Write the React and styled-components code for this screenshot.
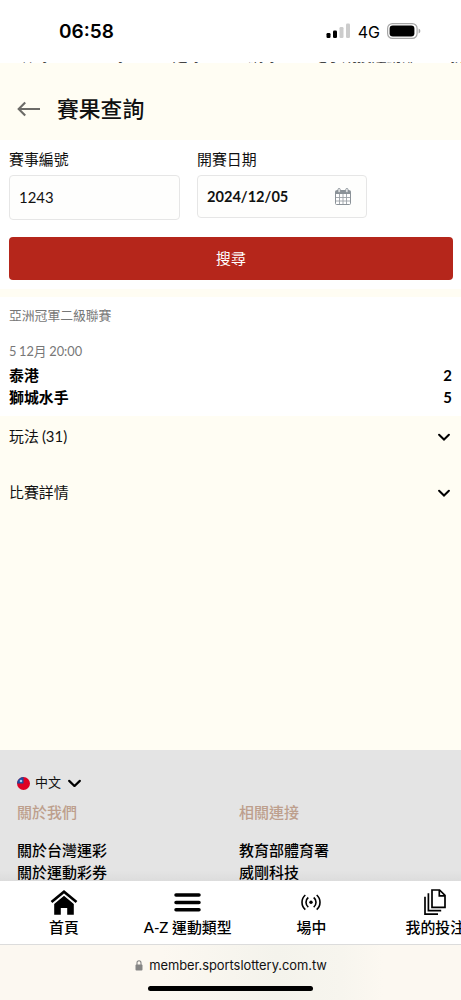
import React from 'react';
import styled, { createGlobalStyle } from 'styled-components';

const CREAM = '#fffdf3';
const RED = '#b5261b';
const BLACK = '#111';

const GlobalStyle = createGlobalStyle`
  * {
    box-sizing: border-box;
  }
  body {
    margin: 0;
    background: ${CREAM};
    color: ${BLACK};
    font-family: Lato, 'Noto Sans CJK TC', sans-serif;
    font-size: 14.9px;
  }
`;

const Screen = styled.div`
  display: flex;
  flex-direction: column;
  width: 461px;
  height: 1000px;
  overflow: hidden;
`;

const StatusBar = styled.header`
  display: flex;
  align-items: center;
  justify-content: space-between;
  flex: none;
  height: 62px;
  padding: 0 40px 0 59px;
  background: #fff;
  font-family: Inter, sans-serif;
`;

const Time = styled.span`
  padding-top: 2px;
  font-size: 19px;
  font-weight: 600;
  line-height: 24px;
  color: #000;
`;

const Indicators = styled.div`
  display: flex;
  align-items: center;
  color: #000;
`;

const Network = styled.span`
  margin: 1px 7px 0 8px;
  font-size: 16px;
  line-height: 20px;
`;

const SportsStrip = styled.nav`
  display: flex;
  align-items: flex-end;
  flex: none;
  gap: 46px;
  height: 2px;
  padding-left: 21px;
  overflow: hidden;
  background: linear-gradient(#fff 50%, ${CREAM} 50%);
  color: #444;
  white-space: nowrap;
`;

const Sport = styled.span`
  flex: none;
  font-size: 14.9px;
  line-height: 17px;

  &:nth-child(n + 5) {
    margin-left: -12px;
  }
`;

const TitleBar = styled.div`
  display: flex;
  align-items: center;
  flex: none;
  gap: 17px;
  height: 76px;
  padding: 14px 17px 0;
`;

const Title = styled.h1`
  margin: 0;
  font-size: 21.8px;
  font-weight: 500;
  line-height: 32px;
`;

const SearchForm = styled.form`
  flex: none;
  height: 149px;
  padding: 8px 9px 0;
  background: #fff;
`;

const Fields = styled.div`
  display: flex;
  gap: 17px;
  height: 89px;
`;

const Field = styled.div`
  width: ${props => props.$width}px;
  line-height: 22px;
`;

const Box = styled.div`
  display: flex;
  align-items: center;
  justify-content: space-between;
  height: ${props => props.$height}px;
  margin-top: 5px;
  padding: 0 15px ${props => (props.$strong ? 0 : 1)}px 9px;
  border: 1px solid #e6e6e6;
  border-radius: 4px;
  background: #fefefd;
  font-size: ${props => (props.$strong ? 14.6 : 14.9)}px;
  font-weight: ${props => (props.$strong ? 700 : 400)};
`;

const SearchButton = styled.button`
  display: block;
  width: 444px;
  height: 43px;
  padding: 0 0 2px;
  border: 0;
  border-radius: 4px;
  background: ${RED};
  color: #fff;
  font: inherit;
`;

const Result = styled.section`
  flex: none;
  height: 119px;
  margin-top: 8px;
  padding: 8px 9px 0;
  background: #fff;
`;

const Meta = styled.div`
  height: ${props => props.$height}px;
  color: #777;
  font-size: 12.8px;
  line-height: 20px;
  word-spacing: -0.7px;
`;

const Team = styled.div`
  display: flex;
  justify-content: space-between;
  color: #000;
  font-weight: 700;
  line-height: 21.5px;
`;

const Accordions = styled.div`
  flex: none;
  height: 334px;
`;

const Accordion = styled.div`
  display: flex;
  align-items: center;
  justify-content: space-between;
  height: 42px;
  margin-bottom: 14px;
  padding: 0 11px 0 9px;

  span {
    padding-bottom: 3px;
    word-spacing: -0.7px;
  }
`;

const Footer = styled.footer`
  flex: none;
  height: 131px;
  padding: 23px 17px 0;
  overflow: hidden;
  background: linear-gradient(#e4e4e4 92%, #dcdcdc);
`;

const Language = styled.div`
  display: flex;
  align-items: center;
  height: 20px;
  font-size: 13px;
  line-height: 20px;

  span {
    margin: 0 7px 2px 5px;
  }
`;

const Columns = styled.div`
  display: grid;
  grid-template-columns: 222px 1fr;
  padding-top: 8px;
`;

const ColumnTitle = styled.h2`
  margin: 0 0 17px;
  color: #bd9f8d;
  font-size: 15px;
  font-weight: 500;
  line-height: 22px;
`;

const FooterLink = styled.a`
  display: block;
  color: #000;
  font-size: 15px;
  font-weight: 500;
  line-height: 21.5px;
`;

const TabBar = styled.nav`
  display: flex;
  flex: none;
  height: 64px;
  border-bottom: 1px solid #dcdcdc;
  background: #fff;
`;

const Tab = styled.a`
  display: flex;
  flex-direction: column;
  align-items: center;
  flex: 0 0 123.8px;
  margin-left: ${props => props.$offset || 0}px;
  padding-top: 7px;
  color: #000;
  font-weight: 500;
  line-height: 23px;
  white-space: nowrap;

  svg {
    height: 28px;
  }
`;

const BrowserBar = styled.div`
  display: flex;
  flex-direction: column;
  align-items: center;
  flex: 1;
  padding-top: 11px;
  background: linear-gradient(90deg, #fcf8f1 35%, #f4f3ec 60%, #f7f5ee 74%, #fcf8f1 83%);
  font-family: Inter, sans-serif;
`;

const Address = styled.div`
  display: flex;
  align-items: center;
  gap: 6px;
  height: 19px;
  padding-left: 1px;
  font-size: 12.9px;
  letter-spacing: -0.03px;
  line-height: 19px;
`;

const HomeIndicator = styled.div`
  width: 165px;
  height: 5px;
  margin-top: 11px;
  border-radius: 3px;
  background: #000;
`;

const Signal = () => (
  <svg width="25" height="16" viewBox="0 0 25 16">
    <rect x="1.5" y="10" width="4" height="5" rx="1.2" />
    <rect x="8" y="7.5" width="4" height="7.5" rx="1.2" />
    <rect x="14.5" y="4" width="4" height="11" rx="1.2" fill="#ccc" />
    <rect x="21" y="0.5" width="4" height="14.5" rx="1.2" fill="#ccc" />
  </svg>
);

const Battery = () => (
  <svg width="34" height="16" viewBox="0 0 34 16">
    <rect x="0.6" y="0.6" width="29.5" height="14.8" rx="4.8" fill="none" stroke="#a6a6a6" strokeWidth="1.2" />
    <rect x="2.6" y="2.6" width="24.8" height="10.8" rx="3.2" />
    <path d="M31.6 5.5q1.8.8 1.8 2.5t-1.8 2.5z" fill="#a6a6a6" />
  </svg>
);

const BackArrow = () => (
  <svg width="23" height="16" viewBox="0 0 23 16" fill="none" stroke="#6c6b67" strokeWidth="2.1">
    <path d="M8.2 1.5 1.7 8l6.5 6.5M1.7 8H23" />
  </svg>
);

const Calendar = () => (
  <svg width="16" height="17" viewBox="0 0 16 17">
    <rect x="0.5" y="2.5" width="15" height="14" rx="1" fill="#fff" stroke="#8b9298" />
    <path d="M.5 3h15v3H.5z" fill="#8b9298" />
    <path d="M1 9.5h14M1 13h14M4.5 6v10M8 6v10M11.5 6v10" stroke="#9ca2a7" strokeWidth=".9" />
    <rect x="3" y="0.5" width="2.2" height="4" rx="1" fill="#fff" stroke="#8b9298" />
    <rect x="10.8" y="0.5" width="2.2" height="4" rx="1" fill="#fff" stroke="#8b9298" />
  </svg>
);

const Chevron = ({ width = 12 }) => (
  <svg width={width} height={width * 0.67} viewBox="0 0 12 8" fill="none" stroke="#000" strokeWidth="2" strokeLinecap="round">
    <path d="m1.1 1.7 4.9 4.8 4.9-4.8" />
  </svg>
);

const Flag = () => (
  <svg width="13" height="13" viewBox="0 0 13 13">
    <circle cx="6.5" cy="6.5" r="6.5" fill="#df0024" />
    <path d="M6.5 0v6.5H0A6.5 6.5 0 0 1 6.5 0z" fill="#1c4c9f" />
    <circle cx="4" cy="4" r="1.3" fill="#a9c8ee" />
  </svg>
);

const HomeIcon = () => (
  <svg width="28" height="28" viewBox="0 0 28 28">
    <path d="M14 6.7 23.8 15v11.8h-6.6v-6.9h-6.4v6.9H4.2V15z" />
    <path d="M1.5 14 14 3.8 26.5 14" fill="none" stroke="#000" strokeWidth="2.7" />
    <path d="M3.2 16 14 7l10.8 9" fill="none" stroke="#fff" strokeWidth="1.1" />
  </svg>
);

const MenuIcon = () => (
  <svg width="27" height="28" viewBox="0 0 27 28" stroke="#000" strokeWidth="3.5" strokeLinecap="round">
    <path d="M2 6.9h23M2 14.4h23M2 21.8h23" />
  </svg>
);

const LiveIcon = () => (
  <svg width="20" height="28" viewBox="0 0 20 28" fill="none" stroke="#000" strokeWidth="1.6">
    <path d="M4.3 7q-3.3 2.8-3.3 7.3t3.3 7.3M7.3 9.5Q5 11.3 5 14.3t2.3 4.8M15.7 7q3.3 2.8 3.3 7.3t-3.3 7.3M12.7 9.5q2.3 1.8 2.3 4.8t-2.3 4.8" />
    <circle cx="10" cy="14.3" r="1.7" fill="#000" stroke="none" />
  </svg>
);

const SlipsIcon = () => (
  <svg width="24" height="28" viewBox="0 0 24 28" fill="none" stroke="#000" strokeWidth="1.7">
    <path d="M9 2h7.6l5.4 5.4v12H9zM16.3 2v5.8H22M5.4 5.2v17.5h12.8M2 8.7v17.5h13" />
  </svg>
);

const Lock = () => (
  <svg width="8" height="11" viewBox="0 0 8 11">
    <rect x="0.5" y="4.5" width="7" height="6" rx="1" fill="#858585" />
    <path d="M2 5V3q0-2.2 2-2.2T6 3v2" fill="none" stroke="#858585" strokeWidth="1.1" />
  </svg>
);

const sports = ['棒球', '籃球', '足球', '網球', '電子競技運動部', '排球'];

const teams = [
  { name: '泰港', score: 2 },
  { name: '獅城水手', score: 5 },
];

const footerColumns = [
  { title: '關於我們', links: ['關於台灣運彩', '關於運動彩券'] },
  { title: '相關連接', links: ['教育部體育署', '威剛科技'] },
];

const tabs = [
  { label: '首頁', icon: <HomeIcon />, offset: 2 },
  { label: 'A-Z 運動類型', icon: <MenuIcon /> },
  { label: '場中', icon: <LiveIcon /> },
  { label: '我的投注', icon: <SlipsIcon /> },
];

export default function App() {
  return (
    <Screen>
      <GlobalStyle />
      <StatusBar>
        <Time>06:58</Time>
        <Indicators>
          <Signal />
          <Network>4G</Network>
          <Battery />
        </Indicators>
      </StatusBar>
      <SportsStrip>
        {sports.map(sport => <Sport key={sport}>{sport}</Sport>)}
      </SportsStrip>
      <TitleBar>
        <BackArrow />
        <Title>賽果查詢</Title>
      </TitleBar>

      <SearchForm>
        <Fields>
          <Field $width={171}>
            賽事編號
            <Box $height={45}>1243</Box>
          </Field>
          <Field $width={170}>
            開賽日期
            <Box $height={43} $strong>
              2024/12/05
              <Calendar />
            </Box>
          </Field>
        </Fields>
        <SearchButton type="button">搜尋</SearchButton>
      </SearchForm>

      <Result>
        <Meta $height={36}>亞洲冠軍二級聯賽</Meta>
        <Meta $height={24}>5 12月 20:00</Meta>
        {teams.map(({ name, score }) => (
          <Team key={name}>
            <span>{name}</span>
            <span>{score}</span>
          </Team>
        ))}
      </Result>

      <Accordions>
        <Accordion>
          <span>玩法 (31)</span>
          <Chevron />
        </Accordion>
        <Accordion>
          <span>比賽詳情</span>
          <Chevron />
        </Accordion>
      </Accordions>

      <Footer>
        <Language>
          <Flag />
          <span>中文</span>
          <Chevron width={13} />
        </Language>
        <Columns>
          {footerColumns.map(({ title, links }) => (
            <div key={title}>
              <ColumnTitle>{title}</ColumnTitle>
              {links.map(link => <FooterLink key={link}>{link}</FooterLink>)}
            </div>
          ))}
        </Columns>
      </Footer>

      <TabBar>
        {tabs.map(({ label, icon, offset }) => (
          <Tab key={label} $offset={offset}>
            {icon}
            {label}
          </Tab>
        ))}
      </TabBar>
      <BrowserBar>
        <Address>
          <Lock />
          member.sportslottery.com.tw
        </Address>
        <HomeIndicator />
      </BrowserBar>
    </Screen>
  );
}
